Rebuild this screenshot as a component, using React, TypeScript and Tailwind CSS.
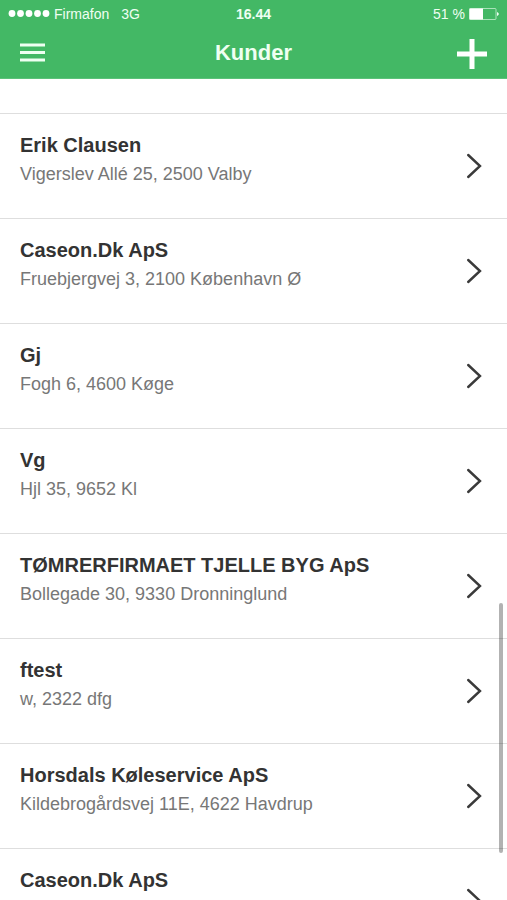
type Customer = {
  id: number;
  name: string;
  address: string;
};

const customers: Customer[] = [
  { id: 1, name: "Erik Clausen", address: "Vigerslev Allé 25, 2500 Valby" },
  { id: 2, name: "Caseon.Dk ApS", address: "Fruebjergvej 3, 2100 København Ø" },
  { id: 3, name: "Gj", address: "Fogh 6, 4600 Køge" },
  { id: 4, name: "Vg", address: "Hjl 35, 9652 Kl" },
  { id: 5, name: "TØMRERFIRMAET TJELLE BYG ApS", address: "Bollegade 30, 9330 Dronninglund" },
  { id: 6, name: "ftest", address: "w, 2322 dfg" },
  { id: 7, name: "Horsdals Køleservice ApS", address: "Kildebrogårdsvej 11E, 4622 Havdrup" },
  { id: 8, name: "Caseon.Dk ApS", address: "" },
];

const StatusBar = () => (
  <div className="grid grid-cols-3 items-center h-7 px-2 text-sm">
    <div className="flex items-center">
      <svg width="42" height="8" viewBox="0 0 42 8" fill="#fff" className="shrink-0">
        <circle cx="4" cy="3.5" r="3.4" />
        <circle cx="12.5" cy="3.5" r="3.4" />
        <circle cx="21" cy="3.5" r="3.4" />
        <circle cx="29.5" cy="3.5" r="3.4" />
        <circle cx="38" cy="3.5" r="3.4" />
      </svg>
      <span className="ml-1">Firmafon</span>
      <span className="ml-3">3G</span>
    </div>
    <span className="text-center font-bold">16.44</span>
    <div className="flex items-center justify-end gap-1">
      <span>51 %</span>
      <svg width="30" height="13" viewBox="0 0 30 13" fill="none">
        <rect x="0.5" y="0.5" width="26.5" height="11" rx="1" stroke="currentColor" strokeOpacity="0.6" />
        <rect x="0.5" y="0.5" width="13.5" height="11" fill="#fff" />
        <path d="M28 4c1.3.5 1.8 1.2 1.8 2s-.5 1.500-1.800 2z" fill="currentColor" />
      </svg>
    </div>
  </div>
);

const Header = () => (
  <header className="shrink-0 bg-[#43b865] text-[#effff2] border-b border-[#5cc27a]">
    <StatusBar />
    <div className="grid grid-cols-3 items-center h-[50px] px-5">
      <button type="button" aria-label="Menu" className="justify-self-start">
        <svg width="25" height="20" viewBox="0 0 25 20" fill="currentColor">
          <rect y="0.5" width="25" height="3" />
          <rect y="8" width="25" height="3" />
          <rect y="15.5" width="25" height="3" />
        </svg>
      </button>
      <h1 className="text-center text-[22px] leading-7 font-bold">Kunder</h1>
      <button type="button" aria-label="Tilføj kunde" className="justify-self-end pt-0.5">
        <svg width="30" height="30" viewBox="0 0 30 30" fill="#fff">
          <rect x="12.5" width="5" height="30" />
          <rect y="12.5" width="30" height="5" />
        </svg>
      </button>
    </div>
  </header>
);

const CustomerRow = ({ customer }: { customer: Customer }) => (
  <li className="border-b border-[#dedede]">
    <a href={`#kunde-${customer.id}`} className="flex items-center justify-between h-[104px] pl-5 pr-[25px]">
      <div className="self-start pt-[17px]">
        <div className="text-xl leading-[29px] font-bold text-[#333]">{customer.name}</div>
        <div className="text-lg leading-[29px] text-[#777]">{customer.address}</div>
      </div>
      <svg width="16" height="26" viewBox="0 0 16 26" fill="none" stroke="#3a3a3a" strokeWidth="2.4" className="shrink-0">
        <path d="M2.200 2 14 13 2.200 24" strokeLinecap="round" />
      </svg>
    </a>
  </li>
);

export default function App() {
  return (
    <div className="h-screen flex flex-col overflow-hidden bg-white font-['Liberation_Sans',Arial,sans-serif]">
      <Header />
      <main className="relative flex-1 overflow-hidden pt-[34px]">
        <ul className="border-t border-[#dedede]">
          {customers.map((customer) => (
            <CustomerRow key={customer.id} customer={customer} />
          ))}
        </ul>
        {/* Scroll indicator */}
        <div className="absolute right-1 top-[524px] w-1 h-[250px] rounded-full bg-black/30" />
      </main>
    </div>
  );
}
